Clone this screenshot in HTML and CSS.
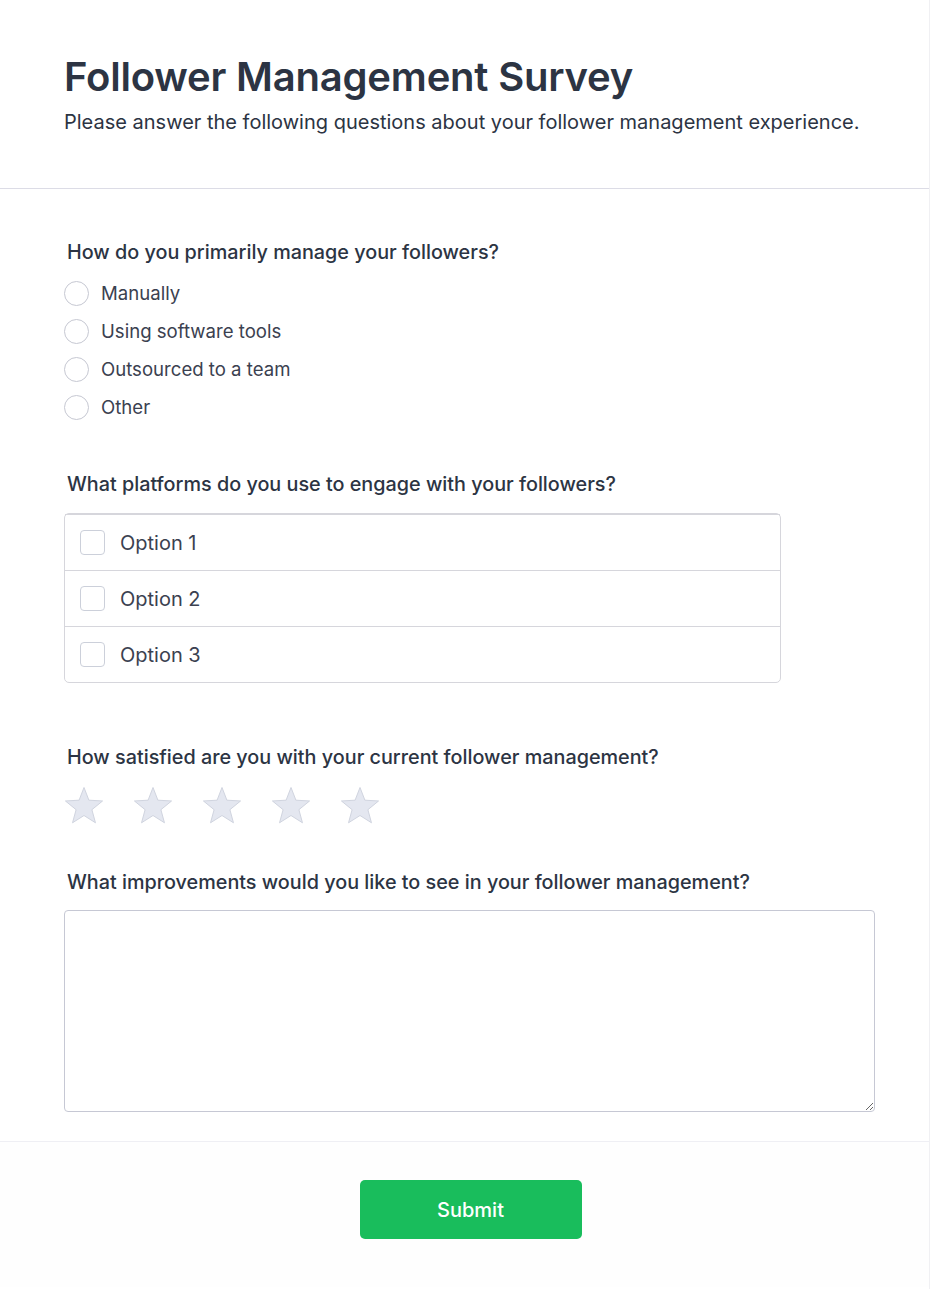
FILE: index.html
```html
<!DOCTYPE html>
<html lang="en">
<head>
<meta charset="utf-8">
<title>Follower Management Survey</title>
<link rel="stylesheet" href="styles.css">
</head>
<body>
<div class="card">
  <header class="head">
    <h1 class="title">Follower Management Survey</h1>
    <p class="subtitle">Please answer the following questions about your follower management experience.</p>
  </header>
  <main class="body">
    <section class="q q-radio">
      <h2 class="q-label">How do you primarily manage your followers?</h2>
      <div class="radios">
        <label class="radio"><span class="circle"></span><span>Manually</span></label>
        <label class="radio"><span class="circle"></span><span>Using software tools</span></label>
        <label class="radio"><span class="circle"></span><span>Outsourced to a team</span></label>
        <label class="radio"><span class="circle"></span><span>Other</span></label>
      </div>
    </section>
    <section class="q q-check">
      <h2 class="q-label">What platforms do you use to engage with your followers?</h2>
      <div class="checks">
        <label class="check"><span class="box"></span><span>Option 1</span></label>
        <label class="check"><span class="box"></span><span>Option 2</span></label>
        <label class="check"><span class="box"></span><span>Option 3</span></label>
      </div>
    </section>
    <section class="q q-stars">
      <h2 class="q-label">How satisfied are you with your current follower management?</h2>
      <div class="stars">
        <svg class="star" viewBox="0 0 40 40"><path d="M20 1.5L24.9 14.2 38.55 14.97 27.9 23.7 31.46 36.78 20 29.5 8.54 36.78 12.1 23.7 1.45 14.97 15.1 14.2Z"/></svg>
        <svg class="star" viewBox="0 0 40 40"><path d="M20 1.5L24.9 14.2 38.55 14.97 27.9 23.7 31.46 36.78 20 29.5 8.54 36.78 12.1 23.7 1.45 14.97 15.1 14.2Z"/></svg>
        <svg class="star" viewBox="0 0 40 40"><path d="M20 1.5L24.9 14.2 38.55 14.97 27.9 23.7 31.46 36.78 20 29.5 8.54 36.78 12.1 23.7 1.45 14.97 15.1 14.2Z"/></svg>
        <svg class="star" viewBox="0 0 40 40"><path d="M20 1.5L24.9 14.2 38.55 14.97 27.9 23.7 31.46 36.78 20 29.5 8.54 36.78 12.1 23.7 1.45 14.97 15.1 14.2Z"/></svg>
        <svg class="star" viewBox="0 0 40 40"><path d="M20 1.5L24.9 14.2 38.55 14.97 27.9 23.7 31.46 36.78 20 29.5 8.54 36.78 12.1 23.7 1.45 14.97 15.1 14.2Z"/></svg>
      </div>
    </section>
    <section class="q q-text">
      <h2 class="q-label">What improvements would you like to see in your follower management?</h2>
      <textarea class="textarea"></textarea>
    </section>
  </main>
  <footer class="foot">
    <button class="submit" type="button">Submit</button>
  </footer>
</div>
</body>
</html>
```
FILE: styles.css
```css
* { box-sizing: border-box; }
html, body { margin: 0; padding: 0; background: #fff; }
body { font-family: Inter, "Noto Sans", sans-serif; color: #2d3340; }
.card {
  width: 930px;
  min-height: 1289px;
  border-right: 1px solid #f0f0f3;
  background: #fff;
}
.head {
  padding: 51px 64px 0 64px;
  height: 189px;
  border-bottom: 1px solid #dcdce6;
}
.title {
  margin: 0;
  font-size: 40px;
  line-height: 52px;
  font-weight: 600;
  color: #2c3443;
  letter-spacing: -0.2px;
}
.subtitle {
  margin: 5px 0 0 0;
  font-size: 20px;
  line-height: 28px;
  color: #2c3443;
  font-weight: 400;
}
.body {
  padding: 49px 54px 29px 64px;
  border-bottom: 1px solid #efeff4;
}
.q-label {
  margin: 0 0 0 3px;
  font-size: 19.8px;
  line-height: 28px;
  font-weight: 500;
  color: #2c3443;
}
.q-radio { margin-bottom: 50px; }
.radios { margin-top: 15px; display: flex; flex-direction: column; gap: 13px; }
.radio {
  display: flex; align-items: center; gap: 12px;
  font-size: 18.6px; line-height: 25px; color: #3b4150;
}
.circle {
  width: 25px; height: 25px; border-radius: 50%;
  border: 1px solid #c6c8d2; background: #fff;
}
.q-check { margin-bottom: 60px; }
.checks {
  margin-top: 15px;
  width: 717px;
  border: 1px solid #d6d6dc;
  border-radius: 5px;
}
.check {
  display: flex; align-items: center; gap: 15px;
  padding: 0 15px;
  height: 56px;
  font-size: 20px; color: #3b4150;
  border-top: 1px solid #d6d6dc;
}
.box {
  width: 25px; height: 25px; border-radius: 4px;
  border: 1px solid #ccd0da; background: #fff;
}
.q-stars { margin-bottom: 42px; }
.stars { margin-top: 15px; display: flex; gap: 29px; }
.star { width: 40px; height: 40px; display: block; }
.star path { fill: #e4e7f0; stroke: #d0d4df; stroke-width: 1; stroke-linejoin: round; }
.textarea {
  display: block;
  margin-top: 14px;
  width: 811px; height: 202px;
  border: 1px solid #c6c8d4;
  border-radius: 4px;
  font-family: inherit;
  font-size: 16px;
  resize: vertical;
  background: #fff;
}
.foot {
  display: flex; justify-content: center;
  padding: 38px 0 48px 0;
  background: #fefefe;
}
.submit {
  width: 222px; height: 59px;
  margin-left: 12px;
  background: #19bd5c;
  color: #fff;
  border: none;
  border-radius: 5px;
  font-family: inherit;
  font-size: 20px;
  font-weight: 500;
}
```
